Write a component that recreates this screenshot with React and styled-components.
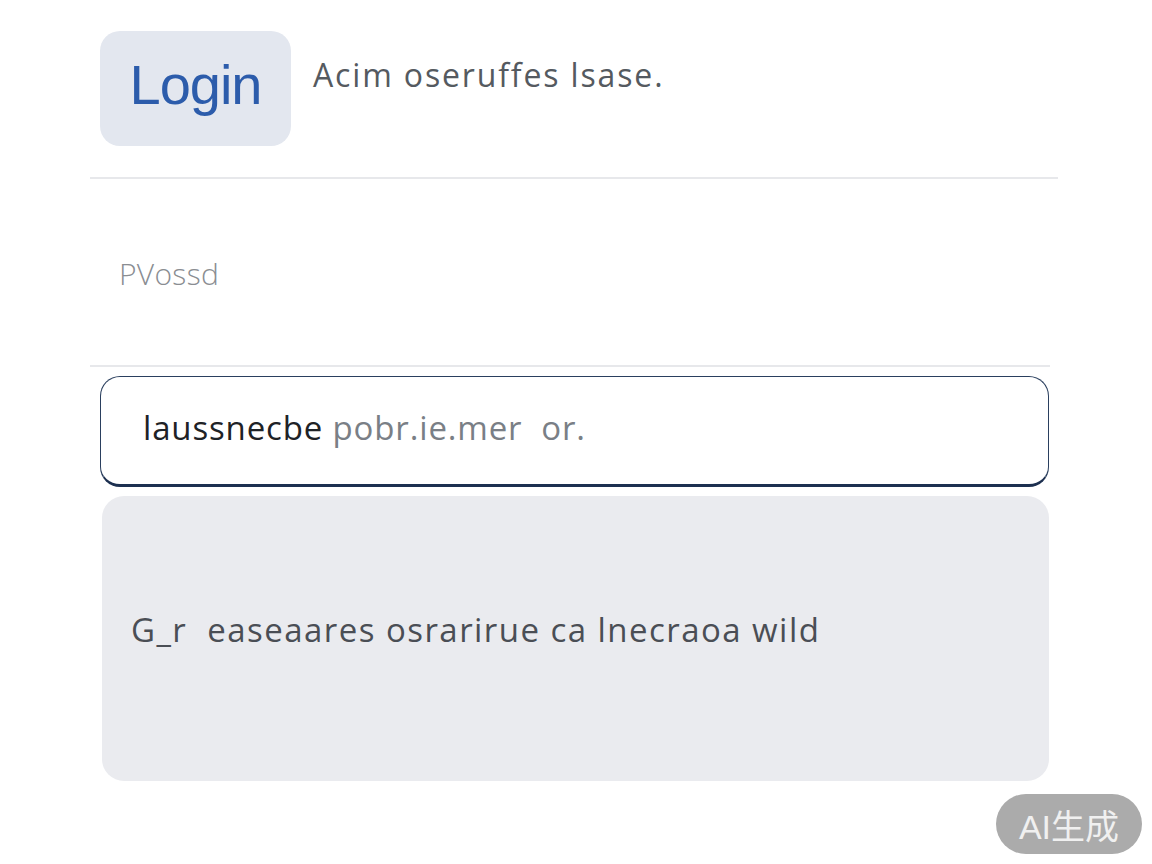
import React from 'react';
import styled, { createGlobalStyle } from 'styled-components';

const Global = createGlobalStyle`
  html, body {
    margin: 0;
    padding: 0;
    background: #ffffff;
    font-family: "Open Sans", "Liberation Sans", "Noto Sans CJK SC", sans-serif;
  }
`

const Page = styled.div`
  position: relative;
  width: 1152px;
  height: 864px;
  overflow: hidden;
  background: #ffffff;
`

const Main = styled.div`
  display: flex;
  flex-direction: column;
  width: 968px;
  margin-left: 90px;
`

const Header = styled.div`
  display: flex;
  align-items: flex-start;
  gap: 22px;
  padding: 31px 0 31px 10px;
`

const Badge = styled.div`
  display: flex;
  align-items: center;
  justify-content: center;
  width: 191px;
  height: 115px;
  border-radius: 20px;
  background: #e3e7ef;
  color: #2c5cab;
  font-family: "Liberation Sans", sans-serif;
  font-size: 56px;
  letter-spacing: -1px;
  padding-bottom: 8px;
  box-sizing: border-box;
`

const Lead = styled.div`
  margin-top: 28px;
  color: #555a60;
  font-size: 32px;
  line-height: 1;
  letter-spacing: 1.85px;
`

const Rule = styled.div`
  height: 2px;
  width: ${({ $w }) => $w}px;
  background: #e7e8eb;
`

const Field = styled.div`
  height: 186px;
  padding: 80px 0 0 29px;
  box-sizing: border-box;
  color: #8a8d92;
  font-size: 30px;
  font-weight: 300;
  line-height: 1;
  letter-spacing: 0.3px;
`

const Input = styled.div`
  display: flex;
  align-items: center;
  margin: 9px 0 0 10px;
  width: 949px;
  height: 111px;
  box-sizing: border-box;
  padding: 0 0 6px 42px;
  border: 1px solid #2a3f5e;
  border-bottom: 3px solid #1d3050;
  border-radius: 20px;
  background: #ffffff;
  font-size: 33px;
  letter-spacing: 0.85px;
`

const Strong = styled.span`
  color: #1e2226;
`

const Faded = styled.span`
  color: #7a7f86;
`

const Panel = styled.div`
  display: flex;
  align-items: center;
  margin: 9px 0 0 12px;
  width: 947px;
  height: 285px;
  box-sizing: border-box;
  padding: 0 0 18px 29px;
  border-radius: 22px;
  background: #eaebef;
  color: #4a4e55;
  font-size: 33px;
  letter-spacing: 1.45px;
`

const Stamp = styled.div`
  position: absolute;
  top: 794px;
  right: 10px;
  width: 146px;
  height: 60px;
  border-radius: 30px;
  background: #ababab;
  color: #f0f0f0;
  display: flex;
  align-items: center;
  justify-content: center;
  font-family: "Liberation Sans", "Noto Sans CJK SC", sans-serif;
  font-size: 34px;
`

const App = () => {
  return (
    <Page>
      <Global />
      <Main>
        <Header>
          <Badge>Login</Badge>
          <Lead>Acim oseruffes lsase.</Lead>
        </Header>
        <Rule $w={968} />
        <Field>PVossd</Field>
        <Rule $w={960} />
        <Input>
          <Strong>laussnecbe&nbsp;</Strong>
          <Faded>pobr.ie.mer&nbsp;&nbsp;or.</Faded>
        </Input>
        <Panel>G_r&nbsp;&nbsp;easeaares osrarirue ca&nbsp;lnecraoa wild</Panel>
      </Main>
      <Stamp>AI生成</Stamp>
    </Page>
  )
}

export default App;
